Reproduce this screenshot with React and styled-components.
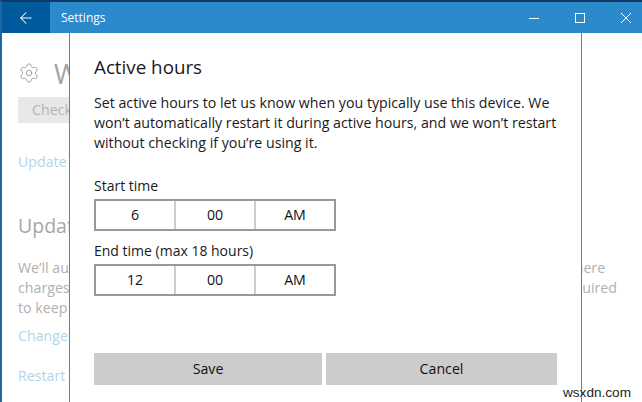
import React from "react";
import styled, { createGlobalStyle } from "styled-components";
import { ArrowLeft, Settings as Gear } from "lucide-react";

const Global = createGlobalStyle`
  html, body { margin: 0; padding: 0; background: #fff; }
  body { font-family: "Open Sans", "Noto Sans", sans-serif; }
  * { box-sizing: border-box; }
`;

const Frame = styled.div`
  position: relative;
  width: 642px;
  height: 402px;
  overflow: hidden;
  background: #fff;
  border-top: 2px solid #0f3a63;
  border-left: 2px solid #1c679f;
`;

const TitleBar = styled.header`
  display: flex;
  align-items: center;
  height: 31px;
  background: #2a8acb;
  color: #fff;
`;

const BackButton = styled.div`
  display: flex;
  align-items: center;
  justify-content: center;
  width: 48px;
  height: 100%;
  background: #005a9e;
`;

const TitleText = styled.span`
  margin-left: 11px;
  font-size: 12px;
  flex: 1;
`;

const WindowControls = styled.div`
  display: flex;
  align-items: center;
  gap: 34px;
  padding-right: 10px;
`;

const WindowIcon = styled.svg`
  display: block;
  width: 12px;
  height: 12px;
  fill: none;
  stroke: #fff;
  stroke-width: 1;
`;

const Behind = styled.main`
  display: flex;
  flex-direction: column;
  align-items: flex-start;
  padding: 25px 0 0 16px;
  color: #a9a9a9;
`;

const Heading = styled.div`
  display: flex;
  align-items: center;
  gap: 14px;
  height: 30px;
  color: #a3a3a3;
  font-size: 27px;
  white-space: nowrap;
`;

const CheckButton = styled.div`
  margin-top: 9px;
  width: 140px;
  height: 26px;
  padding-left: 14px;
  background: #e8e8e8;
  color: #b4b4b4;
  font-size: 14.2px;
  line-height: 26px;
  white-space: nowrap;
`;

const BgLink = styled.div`
  margin-top: ${(p) => p.$top}px;
  color: #b3d4e8;
  font-size: 14.2px;
  line-height: 20px;
  white-space: nowrap;
`;

const SubHeading = styled.div`
  margin-top: 40px;
  color: #a6a6a6;
  font-size: 19.5px;
  line-height: 28px;
  white-space: nowrap;
`;

const BgText = styled.p`
  margin: 18px 0 0;
  font-size: 14.2px;
  line-height: 20px;
  color: #b0b0b0;
  white-space: nowrap;
`;

const Dialog = styled.section`
  position: absolute;
  top: 31px;
  left: 67px;
  width: 513px;
  height: 380px;
  padding: 20px 24px 0 24px;
  display: flex;
  flex-direction: column;
  background: #fff;
  border-left: 1px solid #3f8fb5;
  border-right: 1px solid #3f8fb5;
  color: #1a1a1a;
`;

const DialogTitle = styled.h1`
  margin: 0;
  font-size: 18.8px;
  font-weight: 400;
  line-height: 28px;
`;

const Body = styled.p`
  margin: 12px 0 0;
  font-size: 14.2px;
  line-height: 20px;
  white-space: nowrap;
`;

const FieldLabel = styled.div`
  margin-top: ${(p) => p.$top}px;
  font-size: 14px;
  line-height: 20px;
`;

const Picker = styled.div`
  display: flex;
  width: 242px;
  height: 32px;
  margin-top: 3px;
  border: 2px solid #999;
`;

const PickerCell = styled.div`
  flex: 1;
  display: flex;
  align-items: center;
  justify-content: center;
  padding-bottom: 2px;
  font-size: 14.2px;
  color: #111;
  & + & { border-left: 2px solid #ccc; }
`;

const Actions = styled.div`
  display: grid;
  grid-template-columns: 228px 231px;
  gap: 4px;
  margin-top: 57px;
`;

const ActionButton = styled.div`
  height: 32px;
  background: #ccc;
  text-align: center;
  font-size: 14.2px;
  line-height: 32px;
  color: #111;
`;

const Watermark = styled.div`
  position: absolute;
  right: 11px;
  bottom: 2px;
  font-family: "Liberation Sans", sans-serif;
  font-size: 13.6px;
  line-height: 15px;
  color: #222;
`;

const times = [
  { label: "Start time", top: 23, values: ["6", "00", "AM"] },
  { label: "End time (max 18 hours)", top: 10, values: ["12", "00", "AM"] },
];

export default function App() {
  return (
    <Frame>
      <Global />
      <TitleBar>
        <BackButton>
          <ArrowLeft size={18} strokeWidth={1.4} />
        </BackButton>
        <TitleText>Settings</TitleText>
        <WindowControls>
          <WindowIcon viewBox="0 0 12 12">
            <path d="M1 6.5h10" />
          </WindowIcon>
          <WindowIcon viewBox="0 0 12 12">
            <rect x="1.5" y="1.5" width="9" height="9" />
          </WindowIcon>
          <WindowIcon viewBox="0 0 12 12">
            <path d="M1 1l10 10M11 1L1 11" />
          </WindowIcon>
        </WindowControls>
      </TitleBar>
      <Behind>
        <Heading>
          <Gear size={22} strokeWidth={1} color="#999" />
          <span>Windows Update</span>
        </Heading>
        <CheckButton>Check for updates</CheckButton>
        <BgLink $top={29}>Update history</BgLink>
        <SubHeading>Update settings</SubHeading>
        <BgText>
          We’ll automatically download and install updates, except on metered connections (where
          <br />
          charges may apply). In that case, we’ll automatically download only those updates required
          <br />
          to keep Windows running smoothly.
        </BgText>
        <BgLink $top={8}>Change active hours</BgLink>
        <BgLink $top={20}>Restart options</BgLink>
      </Behind>
      <Dialog>
        <DialogTitle>Active hours</DialogTitle>
        <Body>
          Set active hours to let us know when you typically use this device. We
          <br />
          won’t automatically restart it during active hours, and we won’t restart
          <br />
          without checking if you’re using it.
        </Body>
        {times.map((t) => (
          <div key={t.label}>
            <FieldLabel $top={t.top}>{t.label}</FieldLabel>
            <Picker>
              {t.values.map((v, i) => (
                <PickerCell key={i}>{v}</PickerCell>
              ))}
            </Picker>
          </div>
        ))}
        <Actions>
          <ActionButton>Save</ActionButton>
          <ActionButton>Cancel</ActionButton>
        </Actions>
      </Dialog>
      <Watermark>wsxdn.com</Watermark>
    </Frame>
  );
}
